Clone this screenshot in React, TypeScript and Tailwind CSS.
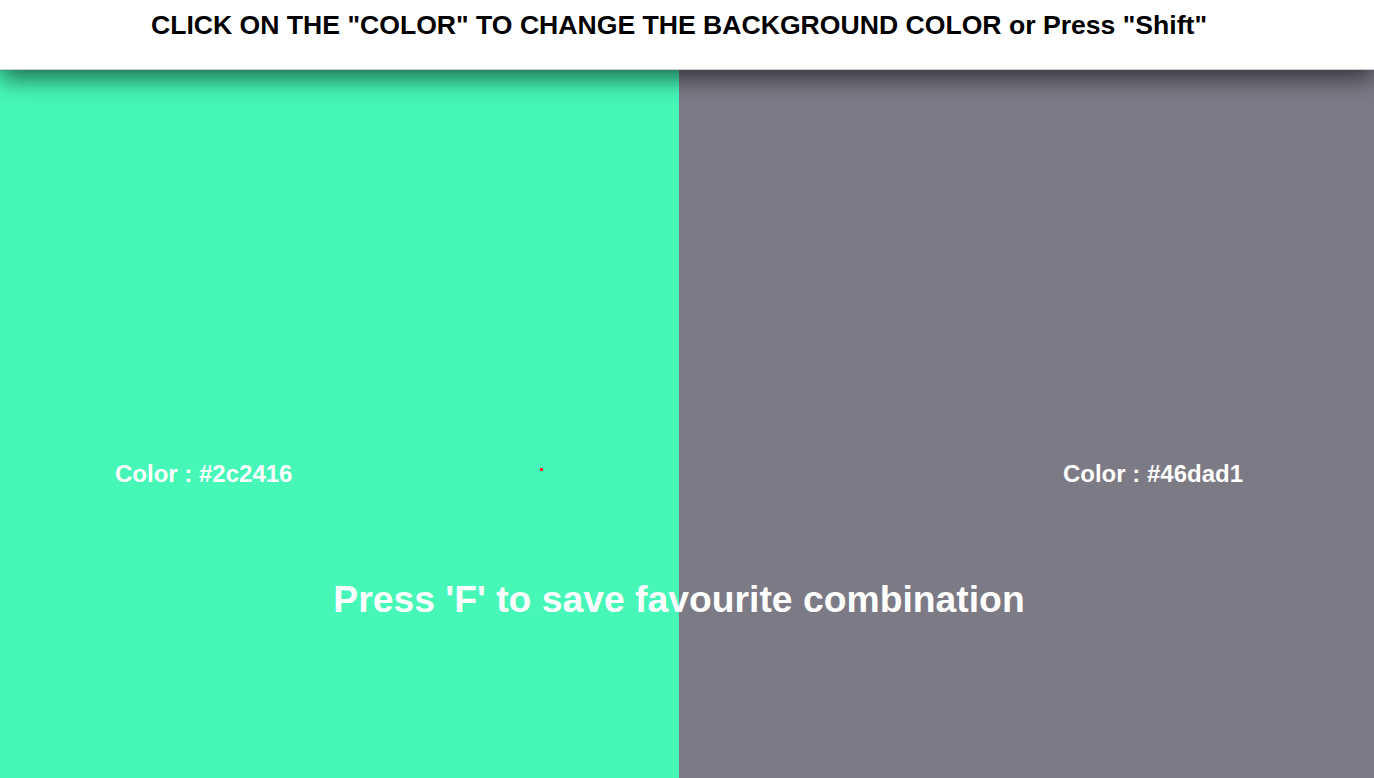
export default function App() {
  return (
    <div className="relative flex h-screen w-full flex-col overflow-hidden bg-white font-['Liberation_Sans',Arial,sans-serif]">
      <header className="relative z-10 h-[70px] w-full shrink-0 border-b border-[#c8cccc] bg-white shadow-[0_8px_24px_rgba(0,0,0,0.6)]">
        <div className="flex w-[1358px] justify-center pt-[8px]">
          <h1 className="text-[26.6px] font-bold leading-[34px] text-black">
            CLICK ON THE "COLOR" TO CHANGE THE BACKGROUND COLOR or Press "Shift"
          </h1>
        </div>
      </header>
      <main className="flex flex-1">
        <section className="relative w-[679px] cursor-pointer bg-[#46f7b8] pt-[390px] pl-[115px]">
          <p className="text-[24px] font-bold leading-[27px] text-white">Color : #2c2416</p>
          <span className="absolute left-[540px] top-[398px] h-[3px] w-[3px] bg-[#e8302a]" />
        </section>
        <section className="flex flex-1 cursor-pointer justify-end bg-[#7c7a85] pt-[390px] pr-[131px]">
          <p className="text-[24px] font-bold leading-[27px] text-white">Color : #46dad1</p>
        </section>
      </main>
      <p className="absolute left-0 top-[576px] w-[1358px] text-center text-[37.3px] font-bold leading-[46px] text-white">
        Press 'F' to save favourite combination
      </p>
    </div>
  )
}
